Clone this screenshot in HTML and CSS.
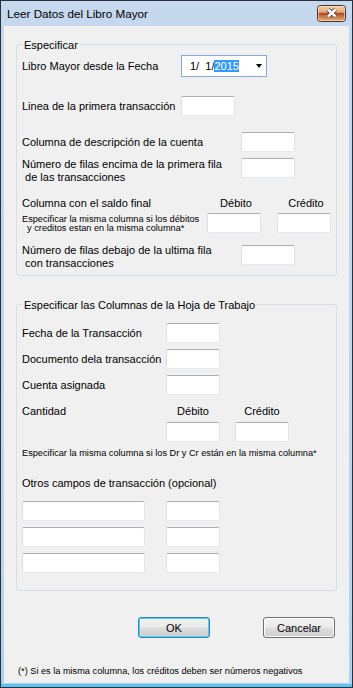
FILE: index.html
```html
<!DOCTYPE html>
<html>

<head>
    <title>Leer Datos del Libro Mayor</title>
    <meta charset="utf-8">
    <meta name="viewport" content="width=device-width, initial-scale=1.0">
    <link rel="stylesheet" href="styles.css">
</head>

<body>
    <div class="window">
        <div class="titlebar">
            <span class="title">Leer Datos del Libro Mayor</span>
            <span class="close">
                <svg width="29" height="17" viewBox="0 0 29 17">
                    <defs>
                        <linearGradient id="cg" x1="0" y1="0" x2="0" y2="1">
                            <stop offset="0" stop-color="#f0d2b2" />
                            <stop offset="0.42" stop-color="#e0a977" />
                            <stop offset="0.5" stop-color="#b4492b" />
                            <stop offset="0.62" stop-color="#c2683f" />
                            <stop offset="1" stop-color="#e8b47f" />
                        </linearGradient>
                    </defs>
                    <rect x="0.5" y="0.5" width="28" height="16" rx="3" fill="url(#cg)" stroke="#4a3226" />
                    <rect x="1.5" y="1.5" width="26" height="14" rx="2" fill="none" stroke="#fbe3c8" stroke-opacity="0.6" />
                    <path d="M11 4.5 L18.5 11.5 M18.5 4.5 L11 11.5" stroke="#5a3b2e" stroke-width="4.2" />
                    <path d="M11 4.5 L18.5 11.5 M18.5 4.5 L11 11.5" stroke="#ffffff" stroke-width="2.4" />
                </svg>
            </span>
        </div>

        <div class="client">
            <div class="group g1">
                <span class="legend">Especificar</span>

                <div class="row r-date">
                    <span class="lbl w159">Libro Mayor desde la Fecha</span>
                    <div class="datepick">
                        <span class="dtext">1/  1/<span class="sel">2015</span></span>
                        <span class="arrow"></span>
                    </div>
                </div>

                <div class="row r-b">
                    <span class="lbl w159">Linea de la primera transacción</span>
                    <span class="box"></span>
                </div>

                <div class="row r-c">
                    <span class="lbl w219">Columna de descripción de la cuenta</span>
                    <span class="box"></span>
                </div>

                <div class="row top r-d">
                    <span class="lbl w219 two">Número de filas encima de la primera fila<br> de las transacciones</span>
                    <span class="box"></span>
                </div>

                <div class="row r-e">
                    <span class="lbl w185">Columna con el saldo final</span>
                    <span class="head">Débito</span>
                    <span class="head gap16">Crédito</span>
                </div>

                <div class="row top r-f">
                    <span class="small w185 pt1">Especificar la misma columna si los débitos<br>  y creditos estan en la misma columna*</span>
                    <span class="box"></span>
                    <span class="box gap16"></span>
                </div>

                <div class="row top r-g">
                    <span class="lbl w219 two mt-1">Número de filas debajo de la ultima fila<br> con transacciones</span>
                    <span class="box"></span>
                </div>
            </div>

            <div class="group g2">
                <span class="legend">Especificar las Columnas de la Hoja de Trabajo</span>

                <div class="row">
                    <span class="lbl w144">Fecha de la Transacción</span>
                    <span class="box"></span>
                </div>
                <div class="row mt6">
                    <span class="lbl w144">Documento dela transacción</span>
                    <span class="box"></span>
                </div>
                <div class="row mt6">
                    <span class="lbl w144">Cuenta asignada</span>
                    <span class="box"></span>
                </div>

                <div class="row r-cant">
                    <span class="lbl w144">Cantidad</span>
                    <span class="head2">Débito</span>
                    <span class="head2 gap15">Crédito</span>
                </div>
                <div class="row r-cant-in">
                    <span class="w144"></span>
                    <span class="box"></span>
                    <span class="box gap15"></span>
                </div>

                <p class="small note">Especificar la misma columna si los Dr y Cr están en la misma columna*</p>

                <p class="lbl otros">Otros campos de transacción (opcional)</p>

                <div class="row r-otros">
                    <span class="box wide"></span>
                    <span class="box gap21"></span>
                </div>
                <div class="row mt6">
                    <span class="box wide"></span>
                    <span class="box gap21"></span>
                </div>
                <div class="row mt6">
                    <span class="box wide"></span>
                    <span class="box gap21"></span>
                </div>
            </div>

            <div class="buttons">
                <button class="btn ok">OK</button>
                <button class="btn">Cancelar</button>
            </div>

            <p class="small footer">(*) Si es la misma columna, los créditos deben ser números negativos</p>
        </div>
    </div>
</body>

</html>
```

FILE: styles.css
```css
body {
    margin: 0;
    width: 353px;
    height: 688px;
    background: #ffffff;
    font-family: "Liberation Sans", Arial, sans-serif;
    font-size: 11px;
    color: #000000;
}

.window {
    box-sizing: border-box;
    width: 353px;
    height: 688px;
    border: 1px solid #27323d;
    background: linear-gradient(#c5d8ee, #bdd4ee 80%, #a9d2f0);
    box-shadow: inset 0 -3px #5fc3ee;
    padding: 0 3px 4px 3px;
    display: flex;
    flex-direction: column;
}

.titlebar {
    height: 25px;
    display: flex;
    justify-content: space-between;
    align-items: flex-start;
    padding: 0 3px;
}

.title {
    font-size: 11.7px;
    line-height: 14px;
    margin-top: 6px;
}

.close {
    margin-top: 4px;
    height: 17px;
}

.close svg {
    display: block;
}

.client {
    flex: 1;
    background: #f0f0f0;
    display: flex;
    flex-direction: column;
}

/* group boxes */
.group {
    position: relative;
    box-sizing: border-box;
    width: 321px;
    margin-left: 12px;
    border: 1px solid #d5dfe5;
    border-radius: 3px;
    padding-left: 5px;
}

.legend {
    position: absolute;
    top: -7px;
    left: 6px;
    padding: 0 1px;
    line-height: 14px;
    background: #f0f0f0;
}

.g1 {
    margin-top: 18px;
    height: 232px;
    padding-top: 10px;
}

.g2 {
    margin-top: 28px;
    height: 287px;
    padding-top: 18px;
}

.row {
    display: flex;
    align-items: center;
}

.row.top {
    align-items: flex-start;
}

.lbl {
    line-height: 14px;
    white-space: pre;
}

.lbl.two {
    line-height: 12.5px;
}

.w159 { width: 159px; flex: none; }
.w219 { width: 219px; flex: none; }
.w185 { width: 185px; flex: none; }
.w144 { width: 144px; flex: none; }

.gap15 { margin-left: 15px; }
.gap16 { margin-left: 16px; }
.gap21 { margin-left: 21px; }
.mt6 { margin-top: 6px; }
.mt-1 { margin-top: -1px; }
.pt1 { padding-top: 2px; }

.box {
    box-sizing: border-box;
    width: 54px;
    height: 20px;
    flex: none;
    background: #ffffff;
    border: 1px solid;
    border-color: #abadb3 #e2e3ea #e3e9ef #dbdfe6;
    border-radius: 2px;
}

.box.wide {
    width: 123px;
}

.small {
    font-family: "Liberation Sans", Arial, sans-serif;
    font-size: 9.2px;
    line-height: 9px;
    white-space: pre;
    margin: 0;
}

/* date picker */
.datepick {
    box-sizing: border-box;
    width: 86px;
    height: 22px;
    display: flex;
    align-items: center;
    justify-content: space-between;
    padding: 0 4px 0 8px;
    background: #ffffff;
    border: 1px solid #85abdc;
}

.dtext {
    white-space: pre;
    line-height: 12px;
}

.sel {
    background: #3399ff;
    color: #ffffff;
}

.arrow {
    width: 0;
    height: 0;
    border-left: 3.5px solid transparent;
    border-right: 3.5px solid transparent;
    border-top: 4px solid #000000;
}

.r-date { height: 22px; margin-top: 0; }
.r-b { margin-top: 19px; }
.r-c { margin-top: 16px; }
.r-d { margin-top: 6px; height: 26px; }
.r-e { margin-top: 12px; height: 14px; }
.r-f { margin-top: 3px; }
.r-g { margin-top: 12px; }

.head {
    width: 54px;
    box-sizing: border-box;
    padding-left: 4px;
    text-align: center;
    line-height: 14px;
}

.head2 {
    width: 54px;
    text-align: center;
    line-height: 14px;
}

.r-cant { margin-top: 9px; height: 14px; }
.r-cant-in { margin-top: 4px; }

.note {
    margin-top: 6px;
    line-height: 10px;
}

.otros {
    margin: 18px 0 0 0;
}

.r-otros { margin-top: 11px; }

/* buttons */
.buttons {
    display: flex;
    gap: 53px;
    margin-top: 26px;
    padding-left: 134px;
}

.btn {
    box-sizing: border-box;
    width: 72px;
    height: 21px;
    padding: 0;
    font-family: "Liberation Sans", Arial, sans-serif;
    font-size: 11px;
    color: #000000;
    border: 1px solid #707070;
    border-radius: 3px;
    background: linear-gradient(#f2f2f2 0%, #ebebeb 48%, #dddddd 52%, #cfcfcf 100%);
    box-shadow: inset 0 0 0 1px #fcfcfc;
}

.btn.ok {
    border-color: #3c7fb1;
    box-shadow: inset 0 0 0 1px #48d2f8;
}

.footer {
    margin-top: 28px;
    padding-left: 14px;
    line-height: 10px;
}
```
